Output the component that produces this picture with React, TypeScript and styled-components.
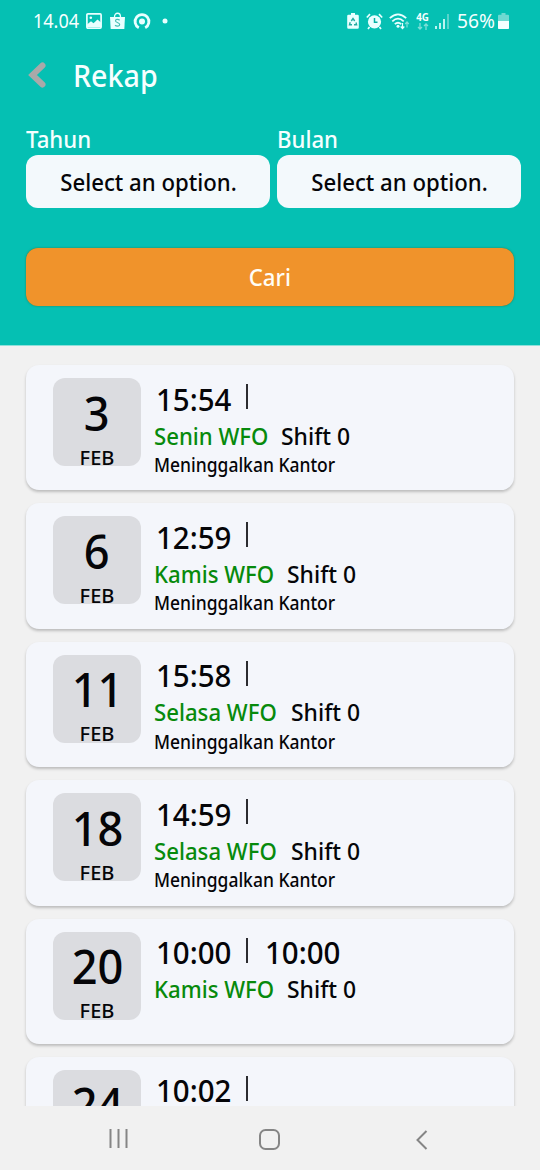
import React from "react";
import styled, { createGlobalStyle } from "styled-components";

const GlobalStyle = createGlobalStyle`
  * { box-sizing: border-box; }
  html, body { margin: 0; padding: 0; }
  body {
    background: #f1f1f1;
    font-family: "Noto Sans", "Open Sans", sans-serif;
    color: #050508;
  }
`;

const Screen = styled.div`
  width: 540px;
  height: 1170px;
  display: flex;
  flex-direction: column;
  overflow: hidden;
  background: #f1f1f1;
`;

const Header = styled.header`
  flex: none;
  height: 346px;
  background: #05c0b3;
  border-bottom: 1px solid #8fe0da;
  color: #f6ffff;
`;

const StatusBar = styled.div`
  height: 42px;
  padding: 0 31px 0 33px;
  display: flex;
  align-items: center;
  justify-content: space-between;
`;

const StatusGroup = styled.div<{ $gap: number }>`
  display: flex;
  align-items: center;
  gap: ${(p) => p.$gap}px;
`;

const BatteryGroup = styled(StatusGroup)`
  margin-left: 2px;
`;

interface TextProps {
  $size: number;
  $scale?: number;
  $width?: number;
  $weight?: number;
  $color?: string;
  $center?: boolean;
}

const Text = styled.span<TextProps>`
  display: block;
  white-space: pre;
  line-height: 1;
  width: ${(p) => (p.$width ? `${p.$width}px` : "auto")};
  font-size: ${(p) => p.$size}px;
  font-weight: ${(p) => p.$weight ?? 480};
  color: ${(p) => p.$color ?? "inherit"};
  transform: scaleX(${(p) => p.$scale ?? 0.924});
  transform-origin: ${(p) => (p.$center ? "center" : "left center")};
`;

const TitleBar = styled.div`
  height: 66px;
  padding-left: 27px;
  display: flex;
  align-items: center;
  gap: 26px;
`;

const Filters = styled.div`
  display: grid;
  grid-template-columns: 244px 244px;
  column-gap: 7px;
  padding: 19px 0 0 26px;
`;

const Field = styled.label`
  display: flex;
  flex-direction: column;
  gap: 4px;
`;

const SelectBox = styled.div`
  height: 53px;
  border-radius: 12px;
  background: #f3f9fc;
  color: #050508;
  display: flex;
  align-items: center;
  justify-content: center;
`;

const SearchButton = styled.button`
  display: flex;
  align-items: center;
  justify-content: center;
  width: 488px;
  height: 58px;
  margin: 40px 0 0 26px;
  padding: 0;
  border: 0;
  border-radius: 12px;
  background: #f0932b;
  color: #fffdf5;
  font-family: inherit;
  box-shadow: 0 0 2px rgba(70, 90, 20, 0.7);
`;

const List = styled.main`
  flex: none;
  height: 760px;
  overflow: hidden;
  padding: 19px 26px 0;
  display: flex;
  flex-direction: column;
  gap: 13px;
`;

const Card = styled.article`
  flex: none;
  height: 125.4px;
  border-radius: 13px;
  background: #f4f6fb;
  box-shadow: 0 2px 3px rgba(0, 0, 0, 0.22);
  padding: 13px 0 0 27px;
  display: flex;
  gap: 13px;
`;

const DateTile = styled.div`
  width: 88px;
  height: 88px;
  border-radius: 12px;
  background: #dbdce0;
  display: flex;
  flex-direction: column;
  align-items: center;
  padding-top: 10.5px;
  gap: 11px;
`;

const Details = styled.div`
  display: flex;
  flex-direction: column;
  padding-top: 5px;
`;

const TimeRow = styled.div`
  height: 32px;
  display: flex;
  align-items: center;
  padding-left: 2px;
`;

const Divider = styled.div`
  width: 2px;
  height: 25px;
  background: #2c2c30;
  margin: 0 17px 5px 0;
`;

const ShiftRow = styled.div`
  display: flex;
  margin: 8.5px 0;
`;

const NavBar = styled.nav`
  height: 64px;
  padding: 2px 112px 0 107px;
  display: grid;
  grid-template-columns: 151px 1fr auto;
  align-items: center;
`;

const entries = [
  { day: "3", start: "15:54", label: "Senin WFO", labelWidth: 127, note: "Meninggalkan Kantor" },
  { day: "6", start: "12:59", label: "Kamis WFO", labelWidth: 133, note: "Meninggalkan Kantor" },
  { day: "11", start: "15:58", label: "Selasa WFO", labelWidth: 136.5, note: "Meninggalkan Kantor" },
  { day: "18", start: "14:59", label: "Selasa WFO", labelWidth: 136.5, note: "Meninggalkan Kantor" },
  { day: "20", start: "10:00", end: "10:00", label: "Kamis WFO", labelWidth: 133 },
  { day: "24", start: "10:02", label: "Senin WFO", labelWidth: 127, note: "Meninggalkan Kantor" },
];

const ImageIcon = () => (
  <svg width="16" height="16" viewBox="0 0 16 16">
    <rect x="0.9" y="0.9" width="14.2" height="14.2" rx="1" fill="none" stroke="#e9ffff" strokeWidth="1.7" />
    <path d="M1 11.5 5 8.2l2.500 2L11.500 6.500l3.500 3V14H1z" fill="#e9ffff" />
    <circle cx="4.8" cy="4.8" r="1.3" fill="#e9ffff" />
  </svg>
);

const BagIcon = () => (
  <svg width="15" height="18" viewBox="0 0 15 18">
    <path d="M4.5 5C4.5 0 10.5 0 10.5 5" fill="none" stroke="#e9ffff" strokeWidth="1.3" />
    <path d="M0 5h15l-.7 12H.7z" fill="#e9ffff" />
    <path d="M9.7 8.2C8 6.8 5.3 7.3 5.5 9c.2 1.6 4.2 1.4 4.2 3.5 0 1.9-3 2.2-4.7.7" fill="none" stroke="#48bdb5" strokeWidth="1.2" />
  </svg>
);

const RingIcon = () => (
  <svg width="18" height="17" viewBox="0 0 18 17">
    <path d="M5.8 14.700A6.900 6.900 0 1 1 12.200 14.700" fill="none" stroke="#e9ffff" strokeWidth="2.8" />
    <circle cx="9" cy="8.5" r="3" fill="#e9ffff" />
  </svg>
);

const DotIcon = () => (
  <svg width="6" height="6" viewBox="0 0 6 6">
    <circle cx="3" cy="3" r="2.5" fill="#e9ffff" />
  </svg>
);

const SaverIcon = () => (
  <svg width="12" height="16" viewBox="0 0 12 16">
    <path d="M4 0h4v1.800h2.500q1.300 0 1.300 1.300v11.400q0 1.300-1.300 1.300h-9Q.2 15.800.2 14.500V3.100q0-1.300 1.300-1.300H4z" fill="#e9ffff" />
    <path d="M4.300 8 6 5.500 7.700 8M9 9.500l.6 2.200H7M5 11.700H2.500l.7-2.500" fill="none" stroke="#24aca2" strokeWidth="1.4" />
  </svg>
);

const AlarmIcon = () => (
  <svg width="17" height="17" viewBox="0 0 17 17">
    <circle cx="8.500" cy="8.800" r="6.600" fill="#e9ffff" />
    <path d="M.8 4.500 4 1.200M16.200 4.500 13 1.200M3.500 14l-1.500 2M13.500 14l1.500 2" stroke="#e9ffff" strokeWidth="1.7" />
    <path d="M8.500 5v4.300h3" fill="none" stroke="#05b0a5" strokeWidth="1.5" />
  </svg>
);

const WifiIcon = () => (
  <svg width="21" height="17" viewBox="0 0 21 17">
    <g fill="none" stroke="#e9ffff" strokeWidth="1.8">
      <path d="M.8 5.200Q9 -2.500 17.200 5.200" />
      <path d="M3.300 8.300Q9 3 14.700 8.300" />
      <path d="M5.800 11.200Q9 8.200 12.200 11.200" />
    </g>
    <circle cx="9" cy="13.300" r="1.500" fill="#e9ffff" />
    <path d="M13.500 10v5.500M11.700 13.500l1.800 2 1.800-2" fill="none" stroke="#e9ffff" strokeWidth="1.2" />
    <path d="M18 14.500V9M16.200 11 18 9l1.800 2" fill="none" stroke="#7edfd8" strokeWidth="1.2" />
  </svg>
);

const NetworkStack = styled.div`
  width: 13px;
  display: flex;
  flex-direction: column;
  align-items: center;
  gap: 1px;
`;

const NetworkIcon = () => (
  <NetworkStack>
    <Text $size={10} $weight={700} $scale={0.98} $center>4G</Text>
    <svg width="12" height="7" viewBox="0 0 12 7">
      <path d="M3 0v6M1 4l2 2 2-2M9 7V1M7 3l2-2 2 2" fill="none" stroke="#7edfd8" strokeWidth="1.3" />
    </svg>
  </NetworkStack>
);

const SignalIcon = () => (
  <svg width="14" height="16" viewBox="0 0 14 16">
    <path d="M1 13v3M5 10v6M9 6v10" stroke="#e9ffff" strokeWidth="1.6" />
    <path d="M13 1v15" stroke="#6fd9d1" strokeWidth="1.6" />
  </svg>
);

const BatteryIcon = () => (
  <svg width="11" height="16" viewBox="0 0 11 16">
    <path d="M3.500 0h4v1.800H10q1 0 1 1V15q0 1-1 1H1q-1 0-1-1V2.800q0-1 1-1h2.500z" fill="#6fd9d1" />
    <path d="M0 8h11v7q0 1-1 1H1q-1 0-1-1z" fill="#f4ffff" />
  </svg>
);

const BackIcon = () => (
  <svg width="20" height="28" viewBox="0 0 20 28">
    <path d="M15.500 4.500 5.500 14l10 9.500" fill="none" stroke="#a9a9a9" strokeWidth="6" strokeLinecap="round" />
  </svg>
);

export default function App() {
  return (
    <Screen>
      <GlobalStyle />
      <Header>
        <StatusBar>
          <StatusGroup $gap={8}>
            <Text $size={20} $weight={430} $scale={0.9} $width={45}>14.04</Text>
            <ImageIcon />
            <BagIcon />
            <StatusGroup $gap={11}>
              <RingIcon />
              <DotIcon />
            </StatusGroup>
          </StatusGroup>
          <StatusGroup $gap={6}>
            <StatusGroup $gap={7}>
              <SaverIcon />
              <AlarmIcon />
            </StatusGroup>
            <WifiIcon />
            <NetworkIcon />
            <SignalIcon />
            <BatteryGroup $gap={2}>
              <Text $size={20} $weight={450} $scale={0.96} $width={39}>56%</Text>
              <BatteryIcon />
            </BatteryGroup>
          </StatusGroup>
        </StatusBar>
        <TitleBar>
          <BackIcon />
          <Text $size={31}>Rekap</Text>
        </TitleBar>
        <Filters>
          {["Tahun", "Bulan"].map((name) => (
            <Field key={name}>
              <Text $size={24}>{name}</Text>
              <SelectBox>
                <Text $size={24} $center>Select an option.</Text>
              </SelectBox>
            </Field>
          ))}
        </Filters>
        <SearchButton>
          <Text $size={24} $center>Cari</Text>
        </SearchButton>
      </Header>
      <List>
        {entries.map((entry) => (
          <Card key={entry.day}>
            <DateTile>
              <Text $size={48} $scale={0.94} $weight={500} $center>{entry.day}</Text>
              <Text $size={20} $weight={500} $scale={1} $center>FEB</Text>
            </DateTile>
            <Details>
              <TimeRow>
                <Text $size={31} $scale={0.95} $width={90}>{entry.start}</Text>
                <Divider />
                {entry.end && <Text $size={31} $scale={0.95}>{entry.end}</Text>}
              </TimeRow>
              <ShiftRow>
                <Text $size={24} $color="#078a0c" $width={entry.labelWidth}>{entry.label}</Text>
                <Text $size={24} $scale={0.955}>Shift 0</Text>
              </ShiftRow>
              {entry.note && <Text $size={19} $scale={0.92}>{entry.note}</Text>}
            </Details>
          </Card>
        ))}
      </List>
      <NavBar>
        <svg width="22" height="22" viewBox="0 0 22 22">
          <path d="M3.500 1v19M11.500 1v19M19.500 1v19" stroke="#858585" strokeWidth="2" />
        </svg>
        <svg width="22" height="22" viewBox="0 0 22 22">
          <rect x="2" y="2" width="19" height="19" rx="5.500" fill="none" stroke="#858585" strokeWidth="2" />
        </svg>
        <svg width="14" height="22" viewBox="0 0 14 22">
          <path d="M12.500 3 3.500 12l9 9" fill="none" stroke="#858585" strokeWidth="2" />
        </svg>
      </NavBar>
    </Screen>
  );
}
